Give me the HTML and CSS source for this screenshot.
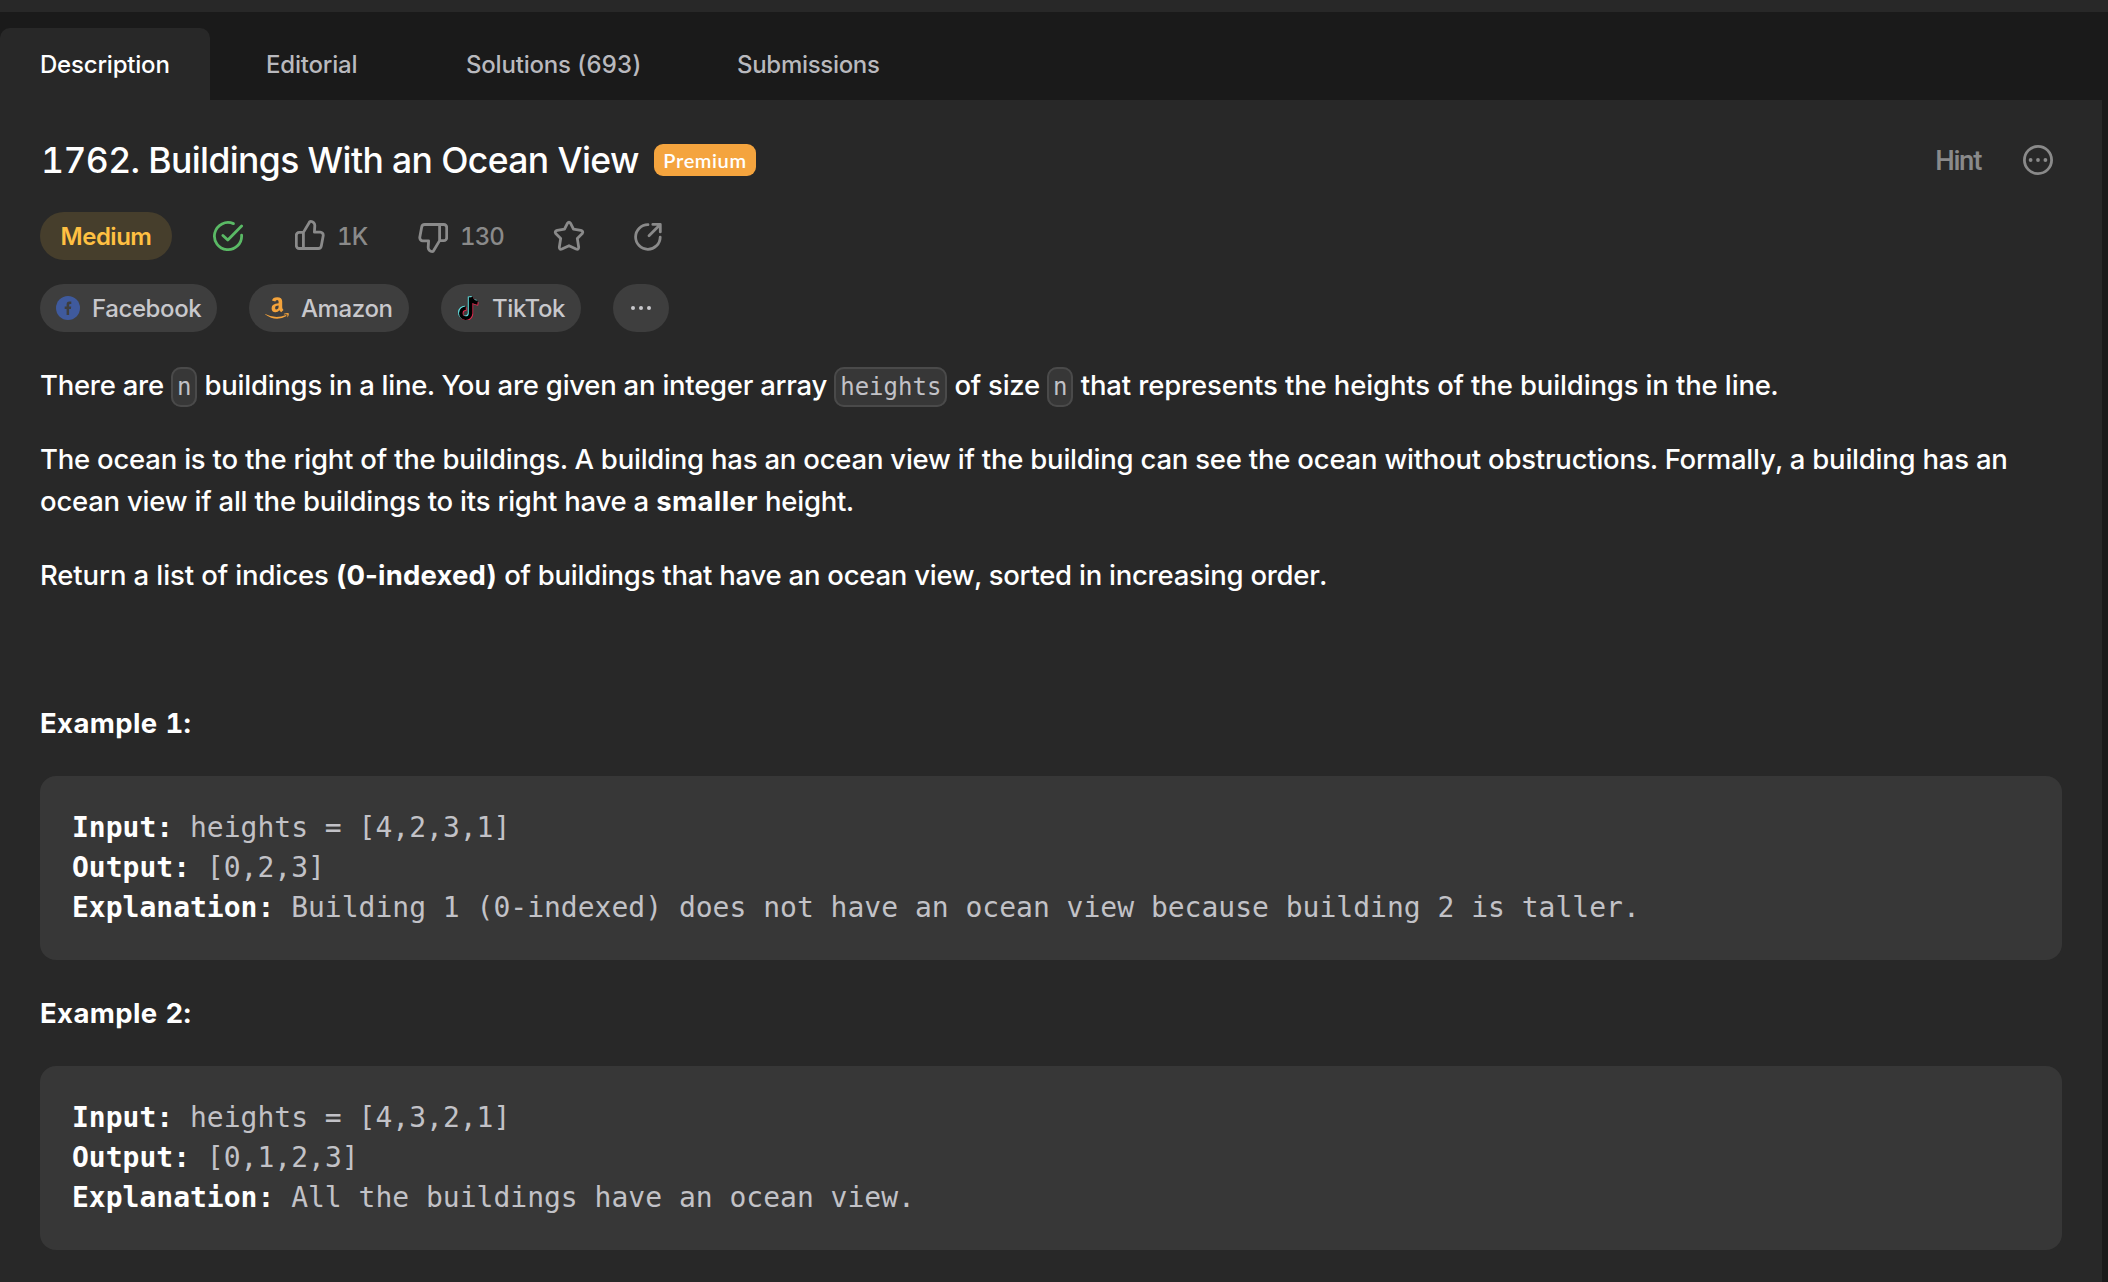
FILE: index.html
```html
<!DOCTYPE html>
<html lang="en">
<head>
<meta charset="utf-8">
<title>1762. Buildings With an Ocean View</title>
<link rel="stylesheet" href="styles.css">
</head>
<body>
<nav class="tabs">
  <a class="tab tab-active">Description</a>
  <a class="tab tab-editorial">Editorial</a>
  <a class="tab tab-solutions">Solutions (693)</a>
  <a class="tab tab-submissions">Submissions</a>
</nav>
<main class="panel">
  <header class="heading">
    <h1 class="title">1762. Buildings With an Ocean View</h1>
    <span class="premium">Premium</span>
    <span class="hint">Hint</span>
    <svg class="icon" width="32" height="32" viewBox="0 0 32 32"><circle cx="16" cy="16" r="13.6"/><g class="dots"><circle cx="8.6" cy="16" r="1.9"/><circle cx="16" cy="16" r="1.9"/><circle cx="23.4" cy="16" r="1.9"/></g></svg>
  </header>
  <div class="stats">
    <span class="difficulty">Medium</span>
    <svg class="icon solved" width="32" height="32" viewBox="0 0 32 32"><path d="M21.4 3.6A13.6 13.6 0 1 0 29.6 15.2M10.9 15.4L15.8 20.1L29.6 6.1"/></svg>
    <span class="vote vote-up">
      <svg class="icon" width="30" height="30" viewBox="0 0 30 30"><path d="M8.4 12.4H4.2a2.9 2.9 0 0 0-2.9 2.9v10.3a2.9 2.9 0 0 0 2.9 2.9h19.1a3 3 0 0 0 3-2.5l1.9-10.3a3 3 0 0 0-3-3.5h-5.8l.4-6.4a4.1 4.1 0 0 0-4.1-4.4c-.7 0-1.2.4-1.4 1.1zM8.4 12.4v16.1"/></svg>
      <span>1K</span>
    </span>
    <span class="vote vote-down">
      <svg class="icon flipped" width="30" height="30" viewBox="0 0 30 30"><path d="M8.4 12.4H4.2a2.9 2.9 0 0 0-2.9 2.9v10.3a2.9 2.9 0 0 0 2.9 2.9h19.1a3 3 0 0 0 3-2.5l1.9-10.3a3 3 0 0 0-3-3.5h-5.8l.4-6.4a4.1 4.1 0 0 0-4.1-4.4c-.7 0-1.2.4-1.4 1.1zM8.4 12.4v16.1"/></svg>
      <span>130</span>
    </span>
    <svg class="icon star" width="32" height="32" viewBox="0 0 32 32"><path d="M14.4 3.3Q16 1.2 17.6 3.3L20.5 9.2L27.8 10.4Q30.8 11.3 29.3 13.5L24.3 18.4L25.7 27.2Q25.6 30 23.1 29L16 25.7L8.9 29Q6.4 30 6.3 27.2L7.7 18.4L2.7 13.5Q1.2 11.3 4.2 10.4L11.5 9.2Z"/></svg>
    <svg class="icon" width="32" height="32" viewBox="0 0 32 32"><path d="M16 4.7A12.3 12.3 0 1 0 28.2 17.2M17 15.7L28 4.7M20.8 4.4H28.3V11.9"/></svg>
  </div>
  <div class="companies">
    <span class="company facebook">
      <svg width="24" height="24" viewBox="0 0 24 24"><circle cx="12" cy="12" r="12" fill="#3f5a9d"/><path d="M10.6 19V13H8.7V10.4H10.6V8.5Q10.6 5.6 13.3 5.6H15.3V8H14Q13.1 8 13.1 9V10.4H15.2L14.9 13H13.1V19Z" fill="#3e3e3e"/></svg>
      <span>Facebook</span>
    </span>
    <span class="company amazon">
      <svg width="24" height="24" viewBox="0 0 24 24"><path d="M7 4.6Q7.6 1.2 12.2 1.2Q17.2 1.2 17.2 5.6V11.2Q17.3 12.6 18.5 14L16.2 16.2Q15 15.4 14.4 14.2Q13 16.2 10.4 16.2Q6.6 16.2 6.6 12.2Q6.6 7.6 13.6 7.3V5.8Q13.6 3.9 12.2 3.9Q10.7 3.9 10.3 5.4ZM13.6 9.6Q10.1 9.6 10.1 11.9Q10.1 13.5 11.5 13.5Q13.8 13.4 13.6 9.6Z" fill="#f4a33b" fill-rule="evenodd"/><path d="M.2 18Q10.5 23.4 21 18.9L21.6 20Q11 26.2 .2 18.6ZM18.9 17.7Q23 16.4 23.9 17.6Q24 20 22.1 21.6Q22.7 19.2 22.3 18.6Q21.4 18.2 19 18.4Z" fill="#f4a33b"/></svg>
      <span>Amazon</span>
    </span>
    <span class="company tiktok">
      <svg width="24" height="24" viewBox="0 0 24 24"><g fill="none" stroke-width="3.6"><path d="M12.6.6V17A4.9 4.9 0 1 1 7.9 11.6" stroke="#61dfe0"/><path d="M12.6.6Q14.2 5.2 19.5 5.6" stroke="#61dfe0"/><path d="M14.4 2V18.4A4.9 4.9 0 1 1 9.6 13M14.4 2Q15.8 7.2 21.4 8" stroke="#e92a50"/><path d="M13.6 1.2V17.5A4.9 4.9 0 1 1 8.8 12.3M14 1.3Q15.4 6.3 20.6 6.9" stroke="#000"/></g></svg>
      <span>TikTok</span>
    </span>
    <span class="company more">
      <svg width="24" height="24" viewBox="0 0 24 24"><g fill="#c8c8cc"><circle cx="4" cy="12" r="2"/><circle cx="12" cy="12" r="2"/><circle cx="20" cy="12" r="2"/></g></svg>
    </span>
  </div>
  <article class="content">
    <p class="intro">There are <code>n</code> buildings in a line. You are given an integer array <code>heights</code> of size <code>n</code><span class="intro-end"> that represents the heights of the buildings in the line.</span></p>
    <p class="rule">The ocean is to the right of the buildings. A building has an ocean view if the building can see the ocean without obstructions. Formally, a building has an<br>ocean view if all the buildings to its right have a <strong>smaller</strong> height.</p>
    <p class="task"><span class="task-lead">Return a list of indices </span><strong class="indexed">(0-indexed)</strong> of buildings that have an ocean view, sorted in increasing order.</p>
    <p>&nbsp;</p>
    <p><strong>Example 1:</strong></p>
<pre><b>Input:</b> heights = [4,2,3,1]
<b>Output:</b> [0,2,3]
<b>Explanation:</b> Building 1 (0-indexed) does not have an ocean view because building 2 is taller.</pre>
    <p><strong>Example 2:</strong></p>
<pre><b>Input:</b> heights = [4,3,2,1]
<b>Output:</b> [0,1,2,3]
<b>Explanation:</b> All the buildings have an ocean view.</pre>
  </article>
</main>
</body>
</html>
```
FILE: styles.css
```css
* { box-sizing: border-box; }

body {
  margin: 0;
  height: 1282px;
  overflow: hidden;
  background: #1a1a1a;
  border-top: 12px solid #282828;
  color: #fff;
  font-family: Inter, "Liberation Sans", sans-serif;
  font-weight: 450;
  font-variant-numeric: tabular-nums;
}

.tabs {
  display: flex;
  height: 88px;
  padding-top: 16px;
}

.tab {
  padding-left: 56px;
  color: #b9b9be;
  font-size: 24px;
  line-height: 74px;
  letter-spacing: -0.2px;
}

.tab-active {
  width: 210px;
  padding-left: 40px;
  border-radius: 10px 10px 0 0;
  background: #282828;
  color: #fff;
}

.tab-editorial { width: 200px; }
.tab-solutions { width: 271px; }
.tab-submissions { letter-spacing: -0.3px; }

.panel {
  width: 2102px;
  height: 1182px;
  padding: 40px 40px 0;
  background: #282828;
}

.heading {
  display: flex;
  align-items: center;
  height: 40px;
  padding-right: 8px;
}

.title {
  margin: 0 16px 0 0;
  padding: 2px 0 0 1px;
  width: 598px;
  font-size: 35.5px;
  font-weight: 550;
  line-height: 42px;
  letter-spacing: -0.62px;
  white-space: nowrap;
}

.premium {
  width: 102px;
  height: 32px;
  border-radius: 9px;
  background: #f4a43e;
  font: 600 20px/33px Lato, sans-serif;
  letter-spacing: 0.6px;
  text-align: center;
}

.hint {
  margin: 0 41px 0 auto;
  padding-top: 2px;
  color: #8a8a8a;
  font: 500 27.5px/40px Roboto, sans-serif;
  letter-spacing: -1.3px;
}

.icon {
  fill: none;
  stroke: #8a8a8a;
  stroke-width: 2.8;
  stroke-linecap: round;
  stroke-linejoin: round;
}

.dots { fill: #8a8a8a; stroke: none; }

.stats {
  display: flex;
  align-items: center;
  height: 48px;
  margin-top: 32px;
  color: #8a8a8a;
  font-size: 24px;
}

.difficulty {
  width: 132px;
  height: 48px;
  border-radius: 24px;
  background: #463e2c;
  color: #ffc042;
  font-weight: 600;
  line-height: 50px;
  letter-spacing: -0.5px;
  text-align: center;
}

.solved { margin-left: 40px; stroke: #5ab965; }

.vote { display: flex; align-items: center; gap: 12px; letter-spacing: -0.9px; }
.vote-up { width: 123px; margin-left: 51px; }
.vote-down { width: 135px; }
.flipped { transform: rotate(180deg); margin-top: 3px; }
.vote-up .icon { margin-top: -3px; }
.star { margin-right: 47px; }

.companies {
  display: flex;
  gap: 32px;
  height: 48px;
  margin-top: 24px;
}

.company {
  display: flex;
  align-items: center;
  gap: 12px;
  padding-left: 16px;
  border-radius: 24px;
  background: #3e3e3e;
  color: #c8c8cc;
  font-size: 24px;
  letter-spacing: -0.4px;
}

.facebook { width: 177px; }
.amazon { width: 160px; }
.tiktok { width: 140px; gap: 11px; }
.more { width: 56px; }

.content {
  margin-top: 32px;
  font-size: 27.5px;
  line-height: 42px;
}

.content p { margin: 0 0 32px; white-space: nowrap; }

.intro { letter-spacing: -0.26px; }
.intro-end { letter-spacing: -0.15px; }
.rule { letter-spacing: -0.235px; }
.task { letter-spacing: -0.26px; }
.task-lead { letter-spacing: -0.12px; }

strong { letter-spacing: 0.4px; }

.indexed {
  letter-spacing: 0.15px;
  font-variant-numeric: normal;
}

code {
  padding: 4px;
  border: 2px solid #4a4a4a;
  border-radius: 10px;
  background: #373737;
  color: #c2c2c7;
  font: 24px "DejaVu Sans Mono", monospace;
  letter-spacing: 0;
}

pre {
  height: 184px;
  margin: 0 0 32px;
  padding: 32px;
  border-radius: 16px;
  background: #373737;
  color: #c2c2c7;
  font: 28px/40px "DejaVu Sans Mono", monospace;
}

pre b { color: #fff; }
```
